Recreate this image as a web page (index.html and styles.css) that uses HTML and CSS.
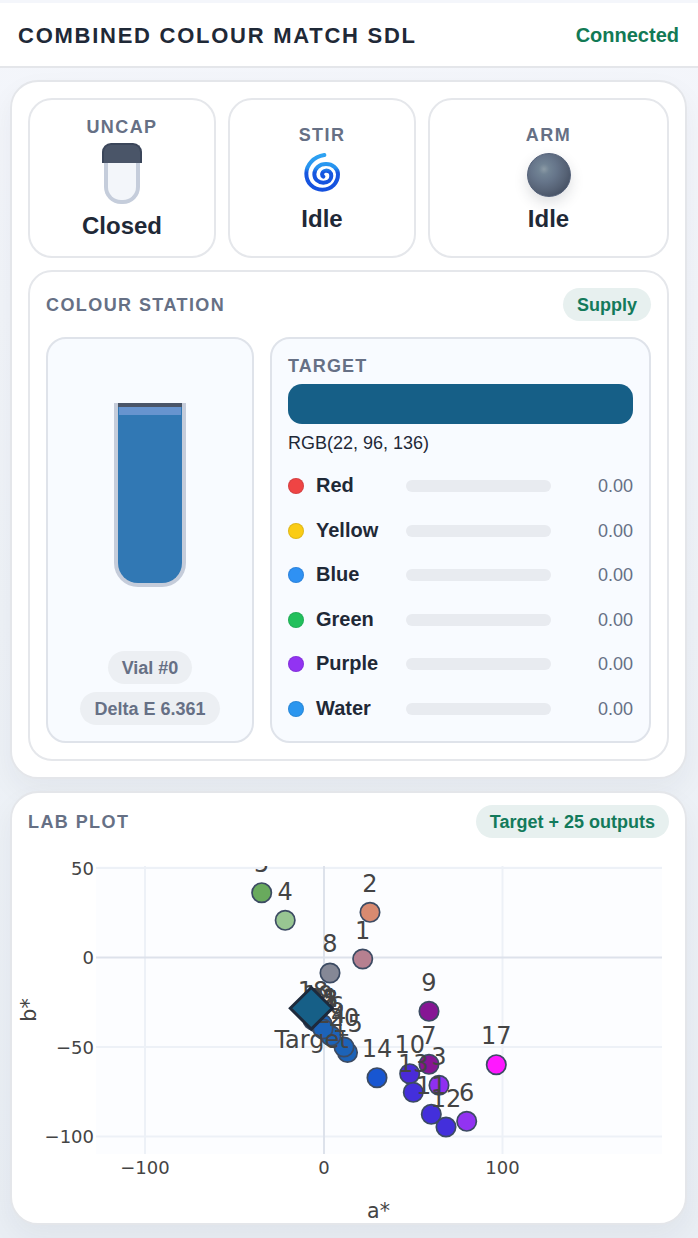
FILE: index.html
```html
<!DOCTYPE html>
<html lang="en">
<head>
<meta charset="utf-8">
<title>Combined Colour Match SDL</title>
<link rel="stylesheet" href="styles.css">
</head>
<body>
<header class="topbar">
  <h1>COMBINED COLOUR MATCH SDL</h1>
  <span class="status">Connected</span>
</header>
<main>
  <section class="card devices">
    <div class="tiles">
      <div class="tile uncap">
        <div class="label">UNCAP</div>
        <div class="bottle"><div class="cap"></div><div class="glass"></div></div>
        <div class="state">Closed</div>
      </div>
      <div class="tile">
        <div class="label">STIR</div>
        <svg class="swirl" viewBox="-9 8 132 132">
          <defs><linearGradient id="sw" gradientUnits="userSpaceOnUse" x1="0" y1="12" x2="0" y2="125"><stop offset="0" stop-color="#2ea3f2"/><stop offset=".36" stop-color="#2692ef"/><stop offset=".48" stop-color="#1757e0"/><stop offset="1" stop-color="#1550de"/></linearGradient></defs>
          <path d="M64 14C32 19 10 43 10 70C10 98 31 118 58 118C86 118 105 97 105 72C105 54 89 41 69 41C49 41 34 54 34 72C34 87 46 97 61 97C76 97 85 88 85 77C85 66 77 60 68 61C58 62 54 74 61 79" fill="none" stroke="url(#sw)" stroke-width="12" stroke-linecap="round"/>
        </svg>
        <div class="state">Idle</div>
      </div>
      <div class="tile">
        <div class="label">ARM</div>
        <div class="ball"></div>
        <div class="state">Idle</div>
      </div>
    </div>
    <div class="station">
      <div class="head"><div class="label">COLOUR STATION</div><span class="pill green">Supply</span></div>
      <div class="panels">
        <div class="panel vialpanel">
          <div class="vialwrap"><div class="vial"><div class="rim"></div><div class="surface"></div></div></div>
          <span class="pill">Vial #0</span>
          <span class="pill">Delta E 6.361</span>
        </div>
        <div class="panel target">
          <div class="label">TARGET</div>
          <div class="swatch"></div>
          <div class="rgb">RGB(22, 96, 136)</div>
          <div class="rows">
            <div class="row"><i class="dot red"></i><b>Red</b><span class="bar"></span><span class="num">0.00</span></div>
            <div class="row"><i class="dot yellow"></i><b>Yellow</b><span class="bar"></span><span class="num">0.00</span></div>
            <div class="row"><i class="dot blue"></i><b>Blue</b><span class="bar"></span><span class="num">0.00</span></div>
            <div class="row"><i class="dot lime"></i><b>Green</b><span class="bar"></span><span class="num">0.00</span></div>
            <div class="row"><i class="dot purple"></i><b>Purple</b><span class="bar"></span><span class="num">0.00</span></div>
            <div class="row"><i class="dot water"></i><b>Water</b><span class="bar"></span><span class="num">0.00</span></div>
          </div>
        </div>
      </div>
    </div>
  </section>
  <section class="card lab">
    <div class="head"><div class="label">LAB PLOT</div><span class="pill green">Target + 25 outputs</span></div>
    <svg class="plot" viewBox="12 840 673 382">
      <defs><clipPath id="area"><rect x="96" y="866" width="566" height="288"/></clipPath></defs>
      <rect x="96" y="866" width="566" height="288" fill="#fcfdff"/>
      <g class="grid">
        <path d="M145 866V1154M502.500 866V1154M96 868H662M96 1047H662M96 1136.500H662"/>
        <path class="zero" d="M324 866V1154M96 957.500H662"/>
      </g>
      <g clip-path="url(#area)">
        <g class="marks">
          <circle cx="362.700" cy="959" r="9.700" fill="#b68090"/>
          <circle cx="370" cy="912.300" r="9.700" fill="#d88a70"/>
          <circle cx="439" cy="1085.300" r="9.700" fill="#8f2ff0"/>
          <circle cx="285.200" cy="920.300" r="9.700" fill="#98c692"/>
          <circle cx="261.700" cy="892.700" r="9.700" fill="#69aa5d"/>
          <circle cx="466.700" cy="1121.300" r="9.700" fill="#9233f2"/>
          <circle cx="429" cy="1064.300" r="9.700" fill="#861694"/>
          <circle cx="330" cy="973" r="9.700" fill="#858896"/>
          <circle cx="429" cy="1011.300" r="9.700" fill="#861694"/>
          <circle cx="409.700" cy="1073.700" r="9.700" fill="#4a2bd8"/>
          <circle cx="431.300" cy="1114.300" r="9.700" fill="#432fdb"/>
          <circle cx="446" cy="1127" r="9.700" fill="#432fdb"/>
          <circle cx="413.300" cy="1092.300" r="9.700" fill="#432fdb"/>
          <circle cx="377" cy="1077.700" r="9.700" fill="#1856d1"/>
          <circle cx="347.500" cy="1052.500" r="9.700" fill="#1c63b8"/>
          <circle cx="330" cy="1035" r="9.700" fill="#1c63b8"/>
          <circle cx="496.300" cy="1064.700" r="9.700" fill="#ff18ff"/>
          <circle cx="313" cy="1020" r="9.700" fill="#1c63b8"/>
          <circle cx="318" cy="1023" r="9.700" fill="#1c63b8"/>
          <circle cx="344" cy="1047" r="9.700" fill="#1c63b8"/>
          <circle cx="321" cy="1024" r="9.700" fill="#1c63b8"/>
          <circle cx="322" cy="1025" r="9.700" fill="#1c63b8"/>
          <circle cx="322" cy="1024" r="9.700" fill="#1c63b8"/>
          <circle cx="331" cy="1036" r="9.700" fill="#1c63b8"/>
          <circle cx="323" cy="1029" r="9.700" fill="#1c63b8"/>
        </g>
        <g class="tags">
          <text x="362.700" y="939">1</text><text x="370" y="892">2</text><text x="439" y="1065">3</text><text x="285.200" y="900">4</text><text x="261.700" y="872">5</text>
          <text x="466.700" y="1101">6</text><text x="429" y="1044">7</text><text x="330" y="952">8</text><text x="429" y="991">9</text><text x="409.700" y="1053">10</text>
          <text x="431.300" y="1094">11</text><text x="446" y="1107">12</text><text x="413.300" y="1072">13</text><text x="377" y="1057">14</text><text x="347.500" y="1032">15</text>
          <text x="329" y="1014">16</text><text x="496.300" y="1044">17</text><text x="313" y="999">18</text><text x="318" y="1003">19</text><text x="344" y="1026">20</text>
          <text x="323" y="1006">21</text><text x="323" y="1007">22</text><text x="323" y="1007">23</text><text x="331" y="1023">24</text><text x="323" y="1008">25</text>
        </g>
        <path d="M311.300 987.500L332.300 1008.300L311.300 1029.100L290.300 1008.300Z" fill="#165f87" stroke="#1e2a3c" stroke-width="3"/>
        <text class="tag" x="311.500" y="1048">Target</text>
      </g>
      <g class="ticks">
        <text x="94" y="874.500" text-anchor="end">50</text><text x="94" y="964" text-anchor="end">0</text><text x="94" y="1053.500" text-anchor="end">−50</text><text x="94" y="1143" text-anchor="end">−100</text>
        <text x="145" y="1174" text-anchor="middle">−100</text><text x="324" y="1174" text-anchor="middle">0</text><text x="502.500" y="1174" text-anchor="middle">100</text>
      </g>
      <g class="axis"><text x="378.500" y="1218">a*</text><text transform="translate(36 1010) rotate(-90)">b*</text></g>
    </svg>
  </section>
</main>
</body>
</html>
```
FILE: styles.css
```css
*{box-sizing:border-box}
body{margin:0;height:1238px;overflow:hidden;padding-top:3px;color:#1f2937;font-family:"Liberation Sans",Arial,sans-serif;background:linear-gradient(180deg,#f4f6fb 0,#eef2f7 50%,#e9eef4 100%)}
.topbar{height:65px;display:flex;align-items:center;justify-content:space-between;padding:2px 19px 0 18px;background:#fff;border-bottom:2px solid #e4e6ea}
h1{margin:0;font-size:22px;line-height:26px;letter-spacing:1.74px}
.status{font-size:20px;font-weight:700;color:#127a55}
main{display:flex;flex-direction:column;gap:12px;padding:12px 11px 0 10px}
.card{background:#fff;border:2px solid #e4e6ea;border-radius:28px;box-shadow:0 12px 28px rgba(31,41,55,.05)}
.devices{height:699px;padding:16px;display:flex;flex-direction:column;gap:12px}
.tiles{display:grid;grid-template-columns:188px 188px 1fr;gap:12px;height:160px}
.tile{border:2px solid #e5e7eb;border-radius:24px;display:flex;flex-direction:column;align-items:center;justify-content:center;gap:8px;padding-top:2px}
.uncap{gap:6px;padding-top:0}
.uncap .state{margin-top:2px}
.label{font-size:18px;line-height:20px;font-weight:700;letter-spacing:1.42px;color:#667085}
.state{font-size:24px;line-height:28px;font-weight:700}
.bottle{width:40px;height:61px;display:flex;flex-direction:column;align-items:center}
.cap{width:40px;height:20px;background:#4a5568;border:2px solid #3b465a;border-bottom:0;border-radius:9px 9px 0 0}
.glass{width:36px;height:41px;background:#f3f6fa;border:4px solid #c5cddb;border-top:0;border-radius:0 0 17px 17px}
.swirl{width:44px;height:44px}
.ball{width:44px;height:44px;border-radius:50%;background:radial-gradient(circle at 38% 36%,#8c9ba6 0,#718394 14%,#66758a 34%,#566275 60%,#3d475a 90%);border:1px solid #536078;box-shadow:0 6px 14px rgba(31,41,55,.15)}
.station{height:491px;border:2px solid #e5e7eb;border-radius:24px;padding:16px;display:flex;flex-direction:column;gap:16px}
.head{display:flex;justify-content:space-between;align-items:center;height:33px}
.pill{flex:none;height:33px;line-height:34px;padding:0 14px;border-radius:17px;background:#eceff3;color:#667085;font-size:18px;font-weight:700;white-space:nowrap}
.pill.green{background:#e7f0ef;color:#137a5b}
.panels{display:grid;grid-template-columns:208px 1fr;grid-template-rows:406px;gap:16px;height:406px}
.panel{border:2px solid #dfe3ea;border-radius:20px;background:#f8fbff;padding:16px}
.vialpanel{display:flex;flex-direction:column;align-items:center;gap:8px}
.vialwrap{flex:1;display:flex;align-items:center}
.vial{width:72px;height:184px;margin-bottom:8px;border:4px solid #c5ccda;border-top:0;border-radius:0 0 24px 24px;background:#3178b4;overflow:hidden}
.rim{height:4px;background:#4a5568}
.surface{height:8px;margin:0 1px;background:#6794cf}
.target .label{letter-spacing:1.1px;padding-top:1px}
.swatch{height:40px;margin-top:8px;border-radius:14px;background:#165f87}
.rgb{font-size:18px;line-height:22px;margin-top:8px}
.rows{display:flex;flex-direction:column;margin-top:8.800px}
.row{height:44.6px;flex:none;display:grid;grid-template-columns:16px 90px 145px 1fr;align-items:center}
.row b{font-size:20px;padding-left:12px}
.dot{width:16px;height:16px;border-radius:50%;box-shadow:inset 0 0 0 1px rgba(31,41,55,.12)}
.red{background:#ef4444}.yellow{background:#facc15}.blue{background:#2f91f3}.lime{background:#22c05c}.purple{background:#9233f2}.water{background:#2b96ef}
.bar{height:12px;border-radius:6px;background:#e8ebf0}
.num{font-size:18px;text-align:right;color:#667085}
.row b,.num{line-height:22px}
.row .dot,.row .bar{transform:translateY(1px)}
.num{padding-top:2px}
.row .bar{margin-left:12px;width:145px}
.lab{height:434px;display:flex;flex-direction:column}
.lab .head{flex:none;margin:12px 16px 0}
.plot{display:block;flex:none;overflow:visible;width:673px;height:382px;margin-top:2px;font-family:"DejaVu Sans",Verdana,sans-serif;fill:#444}
.grid path{fill:none;stroke:#edf1f7;stroke-width:2}
.grid .zero{stroke:#dde2eb}
.marks circle{stroke:#3c4b63;stroke-width:1.7}
.tags text,.tag,.axis text{font-size:24px;text-anchor:middle}
.ticks text{font-size:18px}
.axis text{font-size:20.5px}
```
